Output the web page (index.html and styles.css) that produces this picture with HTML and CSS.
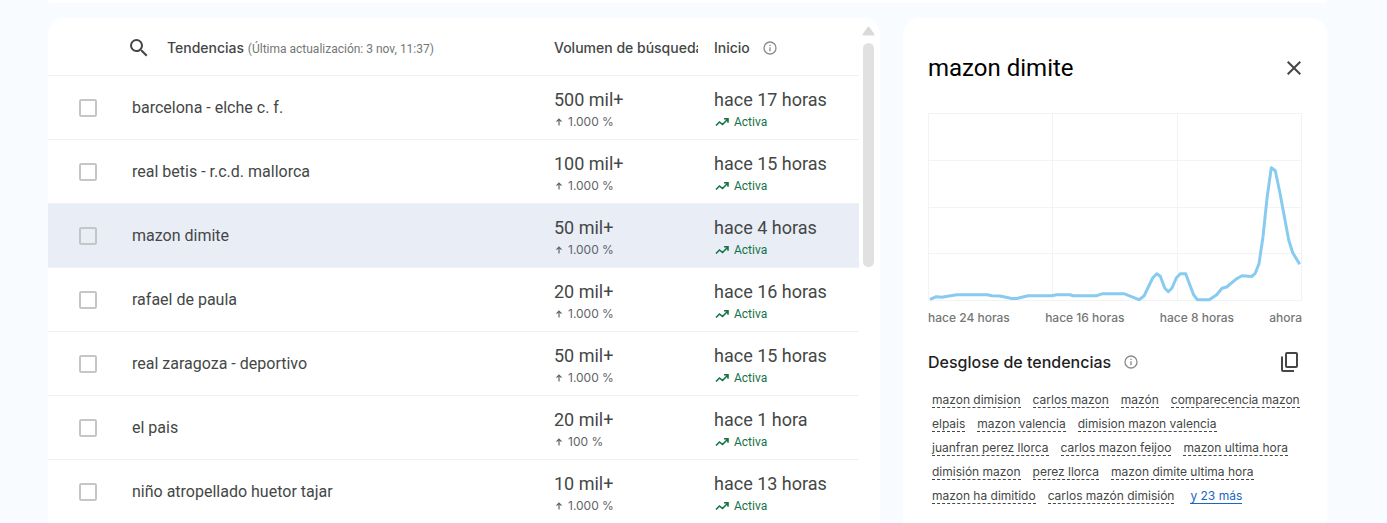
FILE: index.html
```html
<!DOCTYPE html>
<html lang="es">
<head>
<meta charset="utf-8">
<title>Tendencias</title>
<link rel="stylesheet" href="styles.css">
</head>
<body>
<svg class="defs" aria-hidden="true">
  <symbol id="i-info" viewBox="0 0 24 24"><path d="M11 7h2v2h-2zm0 4h2v6h-2zm1-9a10 10 0 1 0 0 20 10 10 0 0 0 0-20zm0 18a8 8 0 1 1 0-16 8 8 0 0 1 0 16z"/></symbol>
  <symbol id="i-up" viewBox="0 0 10 10"><path d="M5 8.500V2.500M2.500 4.700l2.500-2.500 2.500 2.500" fill="none" stroke="currentColor" stroke-width="1.200"/></symbol>
  <symbol id="i-trend" viewBox="0 0 16 16"><path d="M2 11.500l3.500-3.500 3 2.500 5-5M10 4.800h4v4" fill="none" stroke="currentColor" stroke-width="1.600"/></symbol>
</svg>
<div class="page">
  <div class="filters"></div>
  <main class="columns">
    <section class="card trends">
      <table class="table">
        <colgroup><col class="c-check"><col><col class="c-volume"><col class="c-start"></colgroup>
        <thead>
          <tr>
            <th></th>
            <th scope="col"><div class="head">
              <button class="icon-btn search" aria-label="Buscar"><svg class="i-search" viewBox="0 0 24 24"><path d="M15.5 14h-.79l-.28-.27A6.47 6.47 0 0 0 16 9.5 6.5 6.5 0 1 0 9.5 16c1.61 0 3.09-.59 4.23-1.57l.27.28v.79l5 4.99L20.49 19l-4.99-5zm-6 0C7.01 14 5 11.99 5 9.5S7.01 5 9.5 5 14 7.01 14 9.5 11.99 14 9.5 14z"/></svg></button>
              <span>Tendencias <span class="updated">(Última actualización: 3 nov, 11:37)</span></span>
            </div></th>
            <th scope="col"><div class="clip">Volumen de búsquedas</div></th>
            <th scope="col"><div class="head start">Inicio <svg class="i-info"><use href="#i-info"/></svg></div></th>
          </tr>
        </thead>
        <tbody>
          <tr>
            <td class="check"><input type="checkbox" aria-labelledby="t1"></td>
            <td class="name" id="t1">barcelona - elche c. f.</td>
            <td><div class="big">500 mil+</div><div class="small"><svg class="i-up"><use href="#i-up"/></svg>1.000 %</div></td>
            <td><div class="big">hace 17 horas</div><div class="small active"><svg class="i-trend"><use href="#i-trend"/></svg>Activa</div></td>
          </tr>
          <tr>
            <td class="check"><input type="checkbox" aria-labelledby="t2"></td>
            <td class="name" id="t2">real betis - r.c.d. mallorca</td>
            <td><div class="big">100 mil+</div><div class="small"><svg class="i-up"><use href="#i-up"/></svg>1.000 %</div></td>
            <td><div class="big">hace 15 horas</div><div class="small active"><svg class="i-trend"><use href="#i-trend"/></svg>Activa</div></td>
          </tr>
          <tr class="selected">
            <td class="check"><input type="checkbox" aria-labelledby="t3"></td>
            <td class="name" id="t3">mazon dimite</td>
            <td><div class="big">50 mil+</div><div class="small"><svg class="i-up"><use href="#i-up"/></svg>1.000 %</div></td>
            <td><div class="big">hace 4 horas</div><div class="small active"><svg class="i-trend"><use href="#i-trend"/></svg>Activa</div></td>
          </tr>
          <tr>
            <td class="check"><input type="checkbox" aria-labelledby="t4"></td>
            <td class="name" id="t4">rafael de paula</td>
            <td><div class="big">20 mil+</div><div class="small"><svg class="i-up"><use href="#i-up"/></svg>1.000 %</div></td>
            <td><div class="big">hace 16 horas</div><div class="small active"><svg class="i-trend"><use href="#i-trend"/></svg>Activa</div></td>
          </tr>
          <tr>
            <td class="check"><input type="checkbox" aria-labelledby="t5"></td>
            <td class="name" id="t5">real zaragoza - deportivo</td>
            <td><div class="big">50 mil+</div><div class="small"><svg class="i-up"><use href="#i-up"/></svg>1.000 %</div></td>
            <td><div class="big">hace 15 horas</div><div class="small active"><svg class="i-trend"><use href="#i-trend"/></svg>Activa</div></td>
          </tr>
          <tr>
            <td class="check"><input type="checkbox" aria-labelledby="t6"></td>
            <td class="name" id="t6">el pais</td>
            <td><div class="big">20 mil+</div><div class="small"><svg class="i-up"><use href="#i-up"/></svg>100 %</div></td>
            <td><div class="big">hace 1 hora</div><div class="small active"><svg class="i-trend"><use href="#i-trend"/></svg>Activa</div></td>
          </tr>
          <tr>
            <td class="check"><input type="checkbox" aria-labelledby="t7"></td>
            <td class="name" id="t7">niño atropellado huetor tajar</td>
            <td><div class="big">10 mil+</div><div class="small"><svg class="i-up"><use href="#i-up"/></svg>1.000 %</div></td>
            <td><div class="big">hace 13 horas</div><div class="small active"><svg class="i-trend"><use href="#i-trend"/></svg>Activa</div></td>
          </tr>
        </tbody>
      </table>
      <div class="scrollbar" aria-hidden="true">
        <svg class="arrow" viewBox="0 0 13 10"><path d="M6.500 1.500l5 7h-10z" stroke="currentColor" stroke-width="2" stroke-linejoin="round"/></svg>
        <div class="thumb"></div>
      </div>
    </section>

    <aside class="card detail">
      <header class="detail-head">
        <h2 class="title">mazon dimite</h2>
        <button class="icon-btn" aria-label="Cerrar"><svg class="i-close" viewBox="0 0 24 24"><path d="M19 6.41L17.59 5 12 10.59 6.41 5 5 6.41 10.59 12 5 17.59 6.41 19 12 13.41 17.59 19 19 17.59 13.41 12z"/></svg></button>
      </header>
      <svg class="chart" viewBox="0 0 374 189" role="img" aria-label="Interés en las últimas 24 horas">
        <path class="grid" d="M.5 .5H373.5V187.5H.5zM.5 47.500H373.500M.5 94.500H373.500M.5 140.500H373.500M124.500 .5V187.500M249.500 .5V187.500"/>
        <path class="line" d="M2 186.300L8.300 183.700L13.700 184.300L28.700 181.700H59.300L63.700 182.700L72 183L83.700 185.500H88.700L100 182.700H123.700L128.700 181.700H142L145.300 182.700H168.700L174.700 180.700H196L205.300 184.300L211 186.700L216 183L224.700 165L228.700 160.700L232.300 163.300L236.700 175L240.300 178.700L244 175L248.300 165L252.300 160.700H257.700L261 169.700L265.700 182L269.300 186.700H281.300L288.700 181.700L294 175.300L298.700 174L308.700 165.700L314 162.700L323.700 163.500L327 160.700L331 150.700L335 123.700L339 85.300L343.300 54.700L347.300 57.700L352 80.300L360.700 127L364.700 139.700L371.700 151.300"/>
      </svg>
      <div class="axis"><span>hace 24 horas</span><span>hace 16 horas</span><span>hace 8 horas</span><span>ahora</span></div>
      <div class="breakdown-head">
        <h3 class="subtitle">Desglose de tendencias</h3>
        <svg class="i-info"><use href="#i-info"/></svg>
        <button class="icon-btn copy" aria-label="Copiar"><svg class="i-copy" viewBox="0 0 24 24"><rect x="8" y="3" width="11" height="14" rx="1"/><path d="M4 6.500V20a1 1 0 0 0 1 1h11"/></svg></button>
      </div>
      <div class="terms">
        <a href="#">mazon dimision</a><a href="#">carlos mazon</a><a href="#">mazón</a><a href="#">comparecencia mazon</a>
        <a href="#">elpais</a><a href="#">mazon valencia</a><a href="#">dimision mazon valencia</a>
        <a href="#">juanfran perez llorca</a><a href="#">carlos mazon feijoo</a><a href="#">mazon ultima hora</a>
        <a href="#">dimisión mazon</a><a href="#">perez llorca</a><a href="#">mazon dimite ultima hora</a>
        <a href="#">mazon ha dimitido</a><a href="#">carlos mazón dimisión</a><a class="more" href="#">y 23 más</a>
      </div>
    </aside>
  </main>
</div>
</body>
</html>
```

FILE: styles.css
```css
* { box-sizing: border-box; }

body {
  margin: 0;
  background: #f8fbff;
  color: #444746;
  font-family: Roboto, "Liberation Sans", sans-serif;
}

.defs { display: none; }
svg { display: block; flex: none; fill: currentColor; }

.page {
  display: flex;
  flex-direction: column;
  gap: 15px;
  height: 100vh;
  padding: 0 60px 0 48px;
  overflow: hidden;
}

.filters {
  flex: none;
  height: 3px;
  background: #fff;
  border-radius: 0 0 16px 16px;
}

.columns {
  flex: 1;
  display: grid;
  grid-template-columns: minmax(0, 1fr) 424px;
  gap: 23px;
  min-height: 0;
}

.card {
  background: #fff;
  border-radius: 16px 16px 0 0;
  min-height: 0;
  overflow: hidden;
}

.trends { display: flex; align-items: flex-start; padding-right: 2px; }

.table {
  flex: 1;
  width: 100%;
  table-layout: fixed;
  border-collapse: separate;
  border-spacing: 0;
}
.c-check { width: 80px; }
.c-volume { width: 160px; }
.c-start { width: 145px; }

th, td { padding: 0; text-align: left; border-bottom: 1px solid #f0f1f3; }
th { height: 58px; padding-top: 2px; font: 500 14px/20px Inter, sans-serif; }
td { height: 64px; padding-top: 4px; }

.head { display: flex; align-items: center; gap: 16px; }
.start { gap: 12px; }
.updated { font: 400 12px/16px Roboto, sans-serif; color: #747775; }
.clip { margin-right: 16px; overflow: hidden; white-space: nowrap; }

.icon-btn {
  display: flex;
  padding: 0;
  border: 0;
  background: none;
  color: #444746;
}
.search { margin-left: -1px; }
.i-search { width: 24px; height: 24px; }
.i-info { width: 16px; height: 16px; color: #8a8d8c; }
.i-close { width: 24px; height: 24px; }
.i-copy { width: 24px; height: 24px; fill: none; stroke: currentColor; stroke-width: 2; }

.check input {
  appearance: none;
  display: block;
  width: 18px;
  height: 18px;
  margin: 0 0 0 31px;
  border: 2px solid #c4c7c5;
  border-radius: 2px;
}

.selected td { background: #e9edf6; }
.check, .name { padding-top: 0; }
.name { padding-left: 4px; font-size: 16px; line-height: 24px; }
.big { font-size: 18px; line-height: 24px; }
.small {
  display: flex;
  align-items: center;
  gap: 4px;
  font: 400 12px/20px Inter, sans-serif;
  color: #5f6368;
}
.i-up { width: 10px; height: 10px; }
.active { color: #137347; font-family: Roboto, sans-serif; }
.i-trend { width: 16px; height: 16px; }

.scrollbar {
  flex: none;
  display: flex;
  flex-direction: column;
  align-items: center;
  gap: 7px;
  width: 19px;
  padding-top: 8px;
}
.arrow { width: 13px; height: 10px; color: #dadada; }
.thumb { width: 11px; height: 224px; border-radius: 6px; background: #e1e1e1; }

.detail { padding: 32px 25px 0; }
.detail-head { display: flex; align-items: center; justify-content: space-between; height: 36px; }
.title { margin: 0; font: 400 24px/32px Roboto, sans-serif; color: #000; }
.detail-head .icon-btn { margin-right: -4px; }

.chart { width: 100%; height: auto; margin-top: 27px; overflow: visible; }
.grid { fill: none; stroke: #f3f3f4; stroke-width: 1; }
.line { fill: none; stroke: #87cbf0; stroke-width: 3; stroke-linejoin: round; }

.axis {
  display: flex;
  justify-content: space-between;
  margin-top: 8px;
  font: 500 12px/16px Inter, sans-serif;
  color: #747775;
}

.breakdown-head { display: flex; align-items: center; gap: 12px; margin-top: 24px; }
.subtitle { margin: 0; font: 500 16px/24px Inter, sans-serif; color: #1f1f1f; }
.copy { margin-left: auto; }

.terms {
  display: flex;
  flex-wrap: wrap;
  gap: 8px 12px;
  margin-top: 18px;
  padding-left: 4px;
  font: 400 12px/15px Inter, sans-serif;
}
.terms a {
  height: 16px;
  color: #444746;
  text-decoration: none;
  border-bottom: 1px dashed #444746;
}
.terms .more { margin-left: 4px; color: #1a66c2; border-bottom-style: solid; border-color: #1a66c2; }
```
